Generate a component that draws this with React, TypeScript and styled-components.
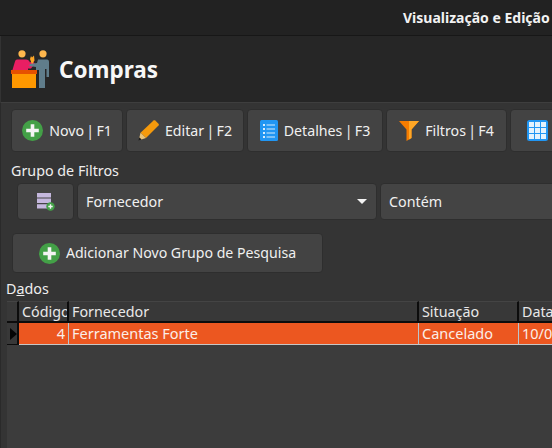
import React from "react";
import styled, { createGlobalStyle } from "styled-components";

const Global = createGlobalStyle`
  html, body {
    margin: 0;
    padding: 0;
    width: 552px;
    height: 448px;
    overflow: hidden;
    background: #343434;
  }
  * { box-sizing: border-box; }
  #root { font-family: "Noto Sans", "Open Sans", sans-serif; }
`;

const Page = styled.div`
  width: 552px;
  height: 448px;
  overflow: hidden;
  display: flex;
  flex-direction: column;
  color: #f0f0f0;
`;

const TitleBar = styled.div`
  height: 36px;
  flex: none;
  background: #222222;
  border-bottom: 1px solid #171717;
  white-space: nowrap;
  overflow: hidden;
  padding: 9px 0 0 403px;
  font-size: 14px;
  line-height: 18px;
  font-weight: 700;
  color: #f2f2f2;
`;

const Header = styled.div`
  height: 66px;
  flex: none;
  display: flex;
  align-items: center;
  gap: 10px;
  padding: 0 0 0 10px;
  background: #262626;
  border-left: 1px solid #333333;
`;

const PageTitle = styled.h1`
  margin: 2px 0 0;
  font-size: 22.5px;
  line-height: 30px;
  font-weight: 700;
  color: #f7f7f7;
`;

const Panel = styled.div`
  flex: 1;
  min-height: 0;
  display: flex;
  flex-direction: column;
  background: #343434;
  border-left: 1px solid #2a2a2a;
  border-top: 1px solid #3e3e3e;
  padding-left: 5px;
`;

const Toolbar = styled.div`
  display: flex;
  gap: 3px;
  padding: 6px 0 0 5px;
  width: 700px;
`;

const ToolButton = styled.button<{ $width: number }>`
  width: ${(p) => p.$width}px;
  height: 43px;
  flex: none;
  display: flex;
  align-items: center;
  justify-content: center;
  gap: 6px;
  background: #434343;
  border: 1px solid #2e2e2e;
  border-radius: 4px;
  color: #f0f0f0;
  font: inherit;
  font-size: 14.2px;
  word-spacing: -1.4px;
  line-height: 18px;
  padding: 0;
`;

const IconOnlyButton = styled(ToolButton)`
  justify-content: flex-start;
  padding: 0 0 0 16px;
`;

const SectionLabel = styled.div<{ $left: number; $top: number }>`
  font-size: 14.3px;
  line-height: 18px;
  margin: ${(p) => p.$top}px 0 0 ${(p) => p.$left}px;
  color: #eeeeee;
`;

const Mnemonic = styled.span`
  text-decoration: underline;
`;

const FilterRow = styled.div`
  display: flex;
  gap: 3px;
  width: 700px;
  margin: 3px 0 0 11px;
`;

const FilterBox = styled.div<{ $width: number }>`
  width: ${(p) => p.$width}px;
  height: 37px;
  flex: none;
  display: flex;
  align-items: center;
  justify-content: space-between;
  padding: 0 9px 0 8px;
  background: #444444;
  border: 1px solid #2e2e2e;
  border-radius: 4px;
  font-size: 14.3px;
`;

const IconBox = styled(FilterBox)`
  justify-content: center;
  padding: 0;
`;

const Caret = styled.span`
  width: 0;
  height: 0;
  border-left: 5px solid transparent;
  border-right: 5px solid transparent;
  border-top: 5px solid #f4f4f4;
`;

const AddGroupButton = styled(ToolButton)`
  height: 40px;
  margin: 13px 0 0 6px;
  word-spacing: 0;
  font-size: 14.15px;
`;

const Grid = styled.div`
  flex: 1;
  min-height: 0;
  margin: 3px 0 0 1px;
  width: 560px;
  display: grid;
  grid-template-columns: 12px 50px 350px 100px 1fr;
  grid-template-rows: 22px 22px;
  align-content: start;
  font-size: 14.3px;
  background: #3c3c3c;
`;

const HeadCell = styled.div`
  background: #383838;
  border-top: 1px solid #444444;
  border-right: 2px solid #0c0c0c;
  border-bottom: 2px solid #0c0c0c;
  padding: 0 0 0 3px;
  line-height: 20px;
  white-space: nowrap;
  overflow: hidden;
  color: #e8e8e8;
`;

const Indicator = styled.div`
  background: #383838;
  border-right: 2px solid #0c0c0c;
  border-bottom: 1px solid #0c0c0c;
  display: flex;
  align-items: center;
  padding-left: 3px;
`;

const Arrow = styled.span`
  width: 0;
  height: 0;
  border-top: 6px solid transparent;
  border-bottom: 6px solid transparent;
  border-left: 7px solid #050505;
`;

const RowCell = styled.div<{ $right?: boolean }>`
  background: #ec5720;
  border-right: 1px solid #b9c4cc;
  border-bottom: 1px solid #c6c6c6;
  padding: 0 3px;
  font-size: 14.5px;
  line-height: 21px;
  white-space: nowrap;
  overflow: hidden;
  text-align: ${(p) => (p.$right ? "right" : "left")};
  color: #fbeee8;
`;

const PlusIcon = ({ size = 21 }: { size?: number }) => (
  <svg width={size} height={size} viewBox="0 0 21 21">
    <circle cx="10.5" cy="10.5" r="10.5" fill="#43a047" />
    <path d="M8.700 4.200h3.600v4.500h4.500v3.600h-4.500v4.500H8.700v-4.500H4.200V8.700h4.500z" fill="#f4f4f4" />
  </svg>
);

const PencilIcon = () => (
  <svg width="21" height="21" viewBox="0 0 21 21">
    <path d="M15.500 0.500c.6-.4 1.200-.4 1.700 0l3.300 3.300c.5.5.5 1.200 0 1.700L8 18 2.500 12.800z" fill="#f59a0c" />
    <path d="M2.500 12.800L8 18l-4.600 1.400-2-2z" fill="#e9c277" />
    <path d="M1.400 17.400l2 2-3 1z" fill="#1c1c1c" />
  </svg>
);

const ListIcon = () => (
  <svg width="18" height="21" viewBox="0 0 18 21">
    <rect width="18" height="21" rx="1.500" fill="#2196f3" />
    <path d="M3 4h2v2H3zM3 8h2v2H3zM3 12h2v2H3zM3 16h2v2H3z" fill="#d8ecfc" />
    <path d="M6.500 4.400H15v1.200H6.500zM6.500 8.400H15v1.200H6.500zM6.500 12.400H15v1.200H6.500zM6.500 16.400H15v1.200H6.500z" fill="#d8ecfc" />
  </svg>
);

const FunnelIcon = () => (
  <svg width="20" height="20" viewBox="0 0 20 20">
    <path d="M0 0h20l-7.500 8.500V17L7.500 20V8.500z" fill="#f57c00" />
    <path d="M10 0h10l-7.500 8.500V17L10 18.500z" fill="#ffa726" />
  </svg>
);

const TableIcon = () => (
  <svg width="21" height="21" viewBox="0 0 21 21">
    <rect width="21" height="21" rx="2.500" fill="#2196f3" />
    <path
      d="M2 2h5v5H2zM8 2h5v5H8zM14 2h5v5h-5zM2 8h5v5H2zM8 8h5v5H8zM14 8h5v5h-5zM2 14h5v5H2zM8 14h5v5H8zM14 14h5v5h-5z"
      fill="#e3f2fd"
    />
  </svg>
);

const StackPlusIcon = () => (
  <svg width="18" height="18" viewBox="0 0 18 18">
    <path d="M0 0h14v4.400H0zM0 5.600h14V10H0zM0 11.200h14v4.400H0z" fill="#c5b8de" />
    <circle cx="13.500" cy="13.500" r="4.200" fill="#43a047" />
    <path d="M12.800 11.300h1.400v1.500h1.500v1.400h-1.500v1.500h-1.400v-1.500h-1.500v-1.400h1.500z" fill="#f4f4f4" />
  </svg>
);

const PeopleIcon = () => (
  <svg width="38" height="38" viewBox="0 0 38 38">
    <circle cx="11" cy="3.800" r="3.600" fill="#ffb74d" />
    <circle cx="32" cy="3.800" r="3.600" fill="#ffb74d" />
    <path d="M6 9.500h9c2 0 3.200 1 4 3l2-1.500 3 2.500-4 5h-3v3H1l3-10c.4-1.200 1-2 2-2z" fill="#e91e63" />
    <path d="M19 9l1-3 1 1.400L23 5.500l.5 5L21 14.500z" fill="#ffa726" />
    <path d="M27 9.500h9c1.400 0 2 1 2 2.500V27h-2.500v-8H34v19h-6V20h-3v-3l-7-1 1-2 7-1z" fill="#607d8b" />
    <rect x="0" y="20" width="26" height="4" fill="#e65100" />
    <rect x="1" y="24" width="24" height="14" fill="#ff9800" />
  </svg>
);

const App: React.FC = () => {
  return (
    <Page>
      <Global />
      <TitleBar>Visualização e Edição</TitleBar>
      <Header>
        <PeopleIcon />
        <PageTitle>Compras</PageTitle>
      </Header>
      <Panel>
        <Toolbar>
          <ToolButton $width={112}>
            <PlusIcon />
            Novo | F1
          </ToolButton>
          <ToolButton $width={118}>
            <PencilIcon />
            Editar | F2
          </ToolButton>
          <ToolButton $width={136}>
            <ListIcon />
            Detalhes | F3
          </ToolButton>
          <ToolButton $width={121}>
            <FunnelIcon />
            Filtros | F4
          </ToolButton>
          <IconOnlyButton $width={121}>
            <TableIcon />
          </IconOnlyButton>
        </Toolbar>
        <SectionLabel $left={5} $top={10}>Grupo de Filtros</SectionLabel>
        <FilterRow>
          <IconBox $width={57}>
            <StackPlusIcon />
          </IconBox>
          <FilterBox $width={300}>
            Fornecedor
            <Caret />
          </FilterBox>
          <FilterBox $width={300}>Contém</FilterBox>
        </FilterRow>
        <AddGroupButton $width={311}>
          <PlusIcon />
          Adicionar Novo Grupo de Pesquisa
        </AddGroupButton>
        <SectionLabel $left={0} $top={7}>
          D<Mnemonic>a</Mnemonic>dos
        </SectionLabel>
        <Grid>
          <HeadCell />
          <HeadCell>Código</HeadCell>
          <HeadCell>Fornecedor</HeadCell>
          <HeadCell>Situação</HeadCell>
          <HeadCell>Data</HeadCell>
          <Indicator>
            <Arrow />
          </Indicator>
          <RowCell $right>4</RowCell>
          <RowCell>Ferramentas Forte</RowCell>
          <RowCell>Cancelado</RowCell>
          <RowCell>10/0</RowCell>
        </Grid>
      </Panel>
    </Page>
  );
};

export default App;
